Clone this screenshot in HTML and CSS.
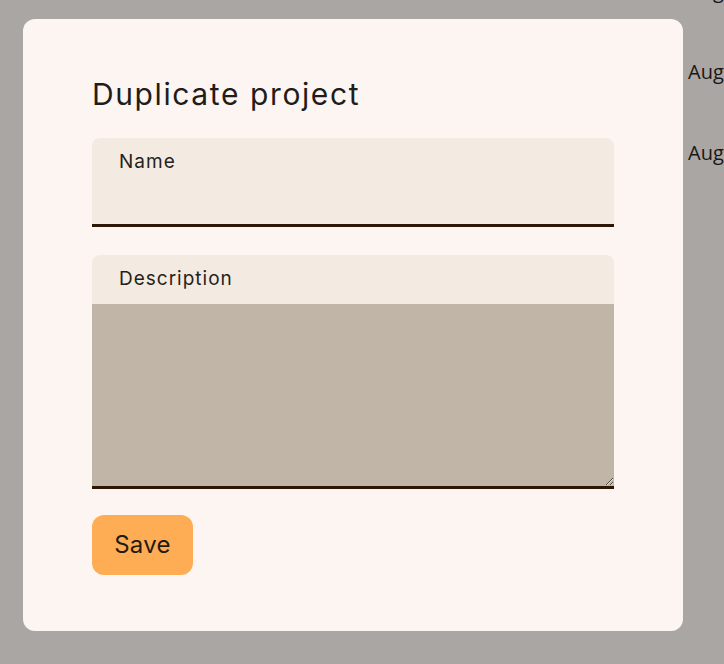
FILE: index.html
```html
<!DOCTYPE html>
<html lang="en">
<head>
<meta charset="utf-8">
<title>Duplicate project</title>
<link rel="stylesheet" href="styles.css">
</head>
<body>
<div class="page">
  <ul class="dates">
    <li>Aug 02, 2024</li>
    <li>Aug 09, 2024</li>
    <li>Aug 16, 2024</li>
  </ul>
</div>
<div class="dialog" role="dialog" aria-labelledby="dlg-title">
  <h2 class="dialog-title" id="dlg-title">Duplicate project</h2>
  <form class="form">
    <label class="field field-name">
      <span class="field-label">Name</span>
      <input class="field-input" type="text">
    </label>
    <label class="field field-desc">
      <span class="field-label">Description</span>
      <textarea class="field-textarea"></textarea>
    </label>
    <div class="actions">
      <button type="button" class="btn-save">Save</button>
    </div>
  </form>
</div>
</body>
</html>
```
FILE: styles.css
```css
html, body {
  margin: 0;
  padding: 0;
  height: 100%;
  overflow: hidden;
}
body {
  background: #aaa6a3;
  font-family: "Inter", "Liberation Sans", sans-serif;
  color: #1f1a17;
  position: relative;
}
.page {
  height: 100%;
}
.dates {
  list-style: none;
  margin: 0;
  padding: 0 0 0 688px;
  font-family: "Open Sans", "Noto Sans", sans-serif;
  font-size: 20px;
  line-height: 27px;
  color: #1b1714;
  white-space: nowrap;
  display: flex;
  flex-direction: column;
  gap: 54px;
  transform: translateY(-23px);
}
.dialog {
  position: absolute;
  left: 23px;
  top: 19px;
  width: 660px;
  height: 612px;
  box-sizing: border-box;
  padding: 57px 69px 56px;
  background: #fdf5f1;
  border-radius: 12px;
}
.dialog-title {
  margin: 0;
  font-size: 30px;
  font-weight: 400;
  line-height: 36px;
  letter-spacing: 1.6px;
  color: #221c19;
}
.form {
  display: flex;
  flex-direction: column;
  margin-top: 26px;
}
.field {
  display: flex;
  flex-direction: column;
  background: #f3eae1;
  border-radius: 8px 8px 0 0;
  border-bottom: 3px solid #2c1707;
}
.field-label {
  display: block;
  padding: 12px 27px 0;
  font-size: 19px;
  line-height: 24px;
  letter-spacing: 1px;
  color: #261f1a;
}
.field-input {
  border: 0;
  outline: 0;
  background: transparent;
  height: 50px;
  padding: 0 27px;
  font: inherit;
}
.field-desc {
  margin-top: 28px;
}
.field-desc .field-label {
  height: 37px;
}
.field-textarea {
  display: block;
  border: 0;
  outline: 0;
  margin: 0;
  padding: 0;
  height: 182px;
  background: #c1b5a8;
  resize: vertical;
  font: inherit;
}
.actions {
  margin-top: 26px;
  display: flex;
}
.btn-save {
  border: 0;
  background: #ffad55;
  color: #241a12;
  border-radius: 12px;
  width: 101px;
  height: 60px;
  font-family: "Inter", "Liberation Sans", sans-serif;
  font-size: 24px;
  letter-spacing: 0.3px;
  padding: 0 0 2px;
  cursor: pointer;
}
```
